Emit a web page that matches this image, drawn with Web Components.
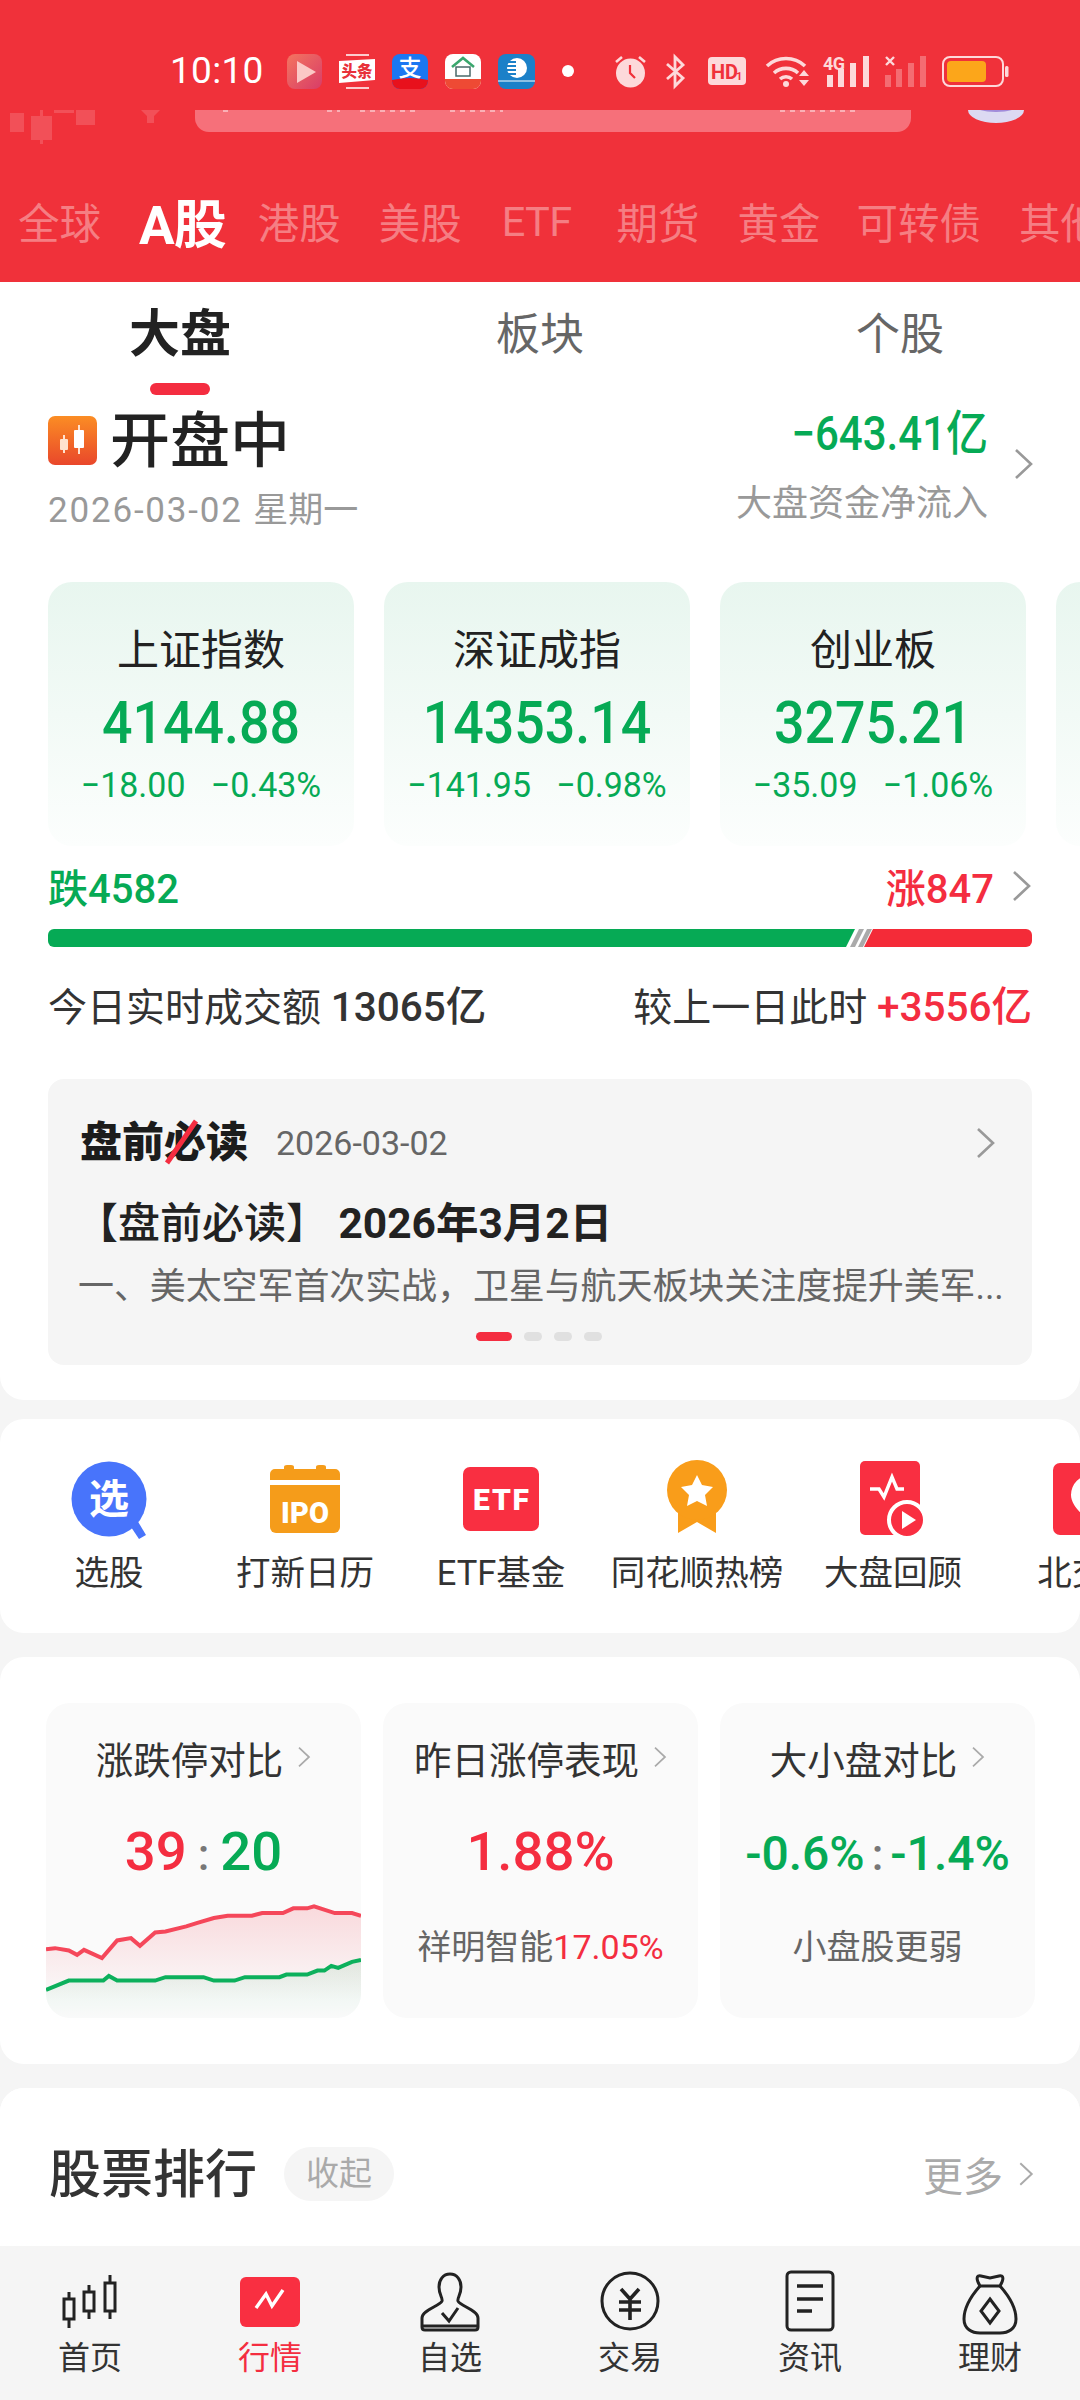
<!DOCTYPE html>
<html lang="zh">
<head>
<meta charset="utf-8">
<title>行情</title>
<style>
  html, body { margin: 0; padding: 0; }
  body { width: 1080px; height: 2400px; overflow: hidden; font-family: Roboto, "Noto Sans CJK SC", sans-serif; background: #f5f5f5; }
  market-app { --red: #f42d40; --green: #06aa55; --head: #f0313a; }
</style>
</head>
<body>
<market-app></market-app>
<script>
const chevron = (w, h, c = '#999') => `<svg width="${w}" height="${h}" viewBox="0 0 21 32" style="display:block;flex:none"><path d="M3 2 L18 16 L3 30" fill="none" stroke="${c}" stroke-width="2.6"/></svg>`;

class StatusBar extends HTMLElement {
  constructor() {
    super();
    this.attachShadow({ mode: 'open' });
    this.shadowRoot.innerHTML = `
      <style>
        :host { display: block; height: 110px; color: #fff; position: relative; }
        .row { display: flex; align-items: center; padding: 36px 0 0 170px; box-sizing: border-box; height: 106px; }
        .time { font-size: 37px; width: 95px; line-height: 70px; letter-spacing: .3px; }
        .apps { display: flex; gap: 17px; margin-left: 22px; }
        svg { display: block; flex: none; overflow: visible; }
        .dot { width: 12px; height: 12px; border-radius: 50%; background: #fff; margin: 0 0 0 27px; flex: none; }
      </style>
      <div class="row">
        <span class="time">10:10</span>
        <div class="apps">
          <svg width="35" height="35" viewBox="0 0 35 35"><defs><linearGradient id="v" x1="0" y1="0" x2="1" y2="1"><stop offset="0" stop-color="#f4755f"/><stop offset="1" stop-color="#d83c68"/></linearGradient></defs><rect width="35" height="35" rx="8" fill="url(#v)"/><path d="M10 7 L29 18 L10 29Z" fill="#fbc9c6"/></svg>
          <svg width="36" height="35" viewBox="0 0 36 35"><path d="M7 1H30M7 34H30" stroke="#fff" stroke-width="1.3"/><path d="M0 7 L36 5 V26 L0 29Z" fill="#fff"/><text x="18" y="23" font-size="15.5" font-weight="900" text-anchor="middle" fill="#e8313a" font-family="Noto Sans CJK SC">头条</text></svg>
          <svg width="36" height="35" viewBox="0 0 36 35"><rect width="36" height="35" rx="8" fill="#1b77f2"/><path d="M0 26 Q18 22 36 26 V27 A8 8 0 0 1 28 35 H8 A8 8 0 0 1 0 27Z" fill="#e8111c"/><text x="18" y="22" font-size="23" font-weight="500" text-anchor="middle" fill="#fff" font-family="Noto Sans CJK SC">支</text></svg>
          <svg width="36" height="35" viewBox="0 0 36 35"><rect width="36" height="35" rx="8" fill="#fff"/><path d="M0 25 H36 V27 A8 8 0 0 1 28 35 H8 A8 8 0 0 1 0 27Z" fill="#ee4a34"/><path d="M7 13 L18 4 L29 13" fill="none" stroke="#3aa76d" stroke-width="2.6"/><rect x="11" y="13" width="14" height="9" fill="none" stroke="#4a6a6a" stroke-width="1.5"/></svg>
          <svg width="37" height="35" viewBox="0 0 37 35"><rect width="37" height="35" rx="8" fill="#1b80c8"/><circle cx="19" cy="14" r="10" fill="#fff"/><path d="M6 8H18M6 12H18M6 16H18M6 20H18" stroke="#1b80c8" stroke-width="1.8"/><path d="M0 27 H37" stroke="#fff" stroke-width="1"/></svg>
        </div>
        <span class="dot"></span>
        <svg style="margin-left:41px" width="31" height="33" viewBox="0 0 31 33"><circle cx="15.5" cy="18" r="14.5" fill="#fdd9da"/><path d="M15 10 V18 L20 23" fill="none" stroke="#f0313a" stroke-width="2.2"/><path d="M1 7 L7 2M30 7 L24 2" stroke="#fdd9da" stroke-width="2.6"/></svg>
        <svg style="margin-left:19px" width="21" height="33" viewBox="0 0 21 33"><path d="M2 9 L18 23 L10 31 V2 L18 10 L2 24" fill="none" stroke="#fdd9da" stroke-width="2.8"/></svg>
        <svg style="margin-left:22px" width="38" height="28" viewBox="0 0 38 28"><rect width="38" height="28" rx="4" fill="#fdd9da"/><text x="3" y="22" font-size="20" font-weight="700" fill="#f0313a" font-family="Roboto">HD</text><text x="28" y="23" font-size="11" font-weight="700" fill="#f0313a" font-family="Roboto">1</text></svg>
        <svg style="margin-left:19px" width="45" height="32" viewBox="0 0 45 32"><path d="M2 11 A28 28 0 0 1 40 11 M9 18 A18 18 0 0 1 33 18 M15 24 A9 9 0 0 1 27 24" fill="none" stroke="#fdd9da" stroke-width="3.6"/><circle cx="21" cy="29" r="3" fill="#fdd9da"/><path d="M34 21 H44 L39 15Z M34 25 H44 L39 31Z" fill="#fdd9da"/></svg>
        <svg style="margin-left:13px" width="47" height="32" viewBox="0 0 47 32"><text x="0" y="15" font-size="18" font-weight="700" fill="#fdd9da" font-family="Roboto" textLength="22">4G</text><rect x="4" y="20" width="6" height="12" fill="#fdd9da"/><rect x="15" y="14" width="6" height="18" fill="#fdd9da"/><rect x="27" y="8" width="6" height="24" fill="#fdd9da"/><rect x="40" y="1" width="6" height="31" fill="#fdd9da"/></svg>
        <svg style="margin-left:14px" width="43" height="32" viewBox="0 0 43 32"><path d="M2 2 L10 10M10 2 L2 10" stroke="#fdd9da" stroke-width="2.4"/><g fill="#fdd9da" opacity=".35"><rect x="1" y="20" width="6" height="12"/><rect x="12" y="14" width="6" height="18"/><rect x="24" y="8" width="6" height="24"/><rect x="36" y="1" width="6" height="31"/></g></svg>
        <svg style="margin-left:15px" width="67" height="31" viewBox="0 0 67 31"><rect x="1" y="1" width="60" height="29" rx="7" fill="none" stroke="#fdd9da" stroke-width="2"/><rect x="5" y="5" width="39" height="21" rx="4" fill="#fca61a"/><rect x="63" y="10" width="3.5" height="11" rx="1.5" fill="#fdd9da"/></svg>
      </div>`;
  }
}

class HeaderTabs extends HTMLElement {
  constructor() {
    super();
    this.attachShadow({ mode: 'open' });
    this.shadowRoot.innerHTML = `
      <style>
        :host { display: block; height: 172px; background: var(--head); overflow: hidden; }
        .top { display: flex; height: 22px; padding-left: 195px; position: relative; }
        .search { width: 716px; height: 22px; background: #f6707a; border-radius: 0 0 14px 14px; }
        .deco { position: absolute; left: 0; top: 0; }
        .specks { position: absolute; left: 195px; top: 0; }
        .avatar { position: absolute; left: 968px; top: 0; }
        .tabs { display: flex; align-items: center; gap: 38px; height: 80px; margin-top: 49px; padding-left: 18px; white-space: nowrap; font-size: 41.5px; color: rgba(255,255,255,.38); }
        .tabs .etf { letter-spacing: -.6px; margin: 0 7px 0 2px; }
        .tabs .gold { margin-right: -2px; }
        .on { color: #fff; font-size: 53px; font-weight: 700; margin-right: -6px; letter-spacing: -1px; }
      </style>
      <div class="top">
        <svg class="deco" width="170" height="40" viewBox="0 0 170 40"><g fill="#fff" opacity=".15"><rect x="10" y="3" width="14" height="19"/><rect x="31" y="6" width="21" height="24"/><rect x="40" y="0" width="3" height="34"/><rect x="54" y="0" width="20" height="3"/><rect x="76" y="0" width="19" height="15"/><path d="M141 0H160L154 6V13H147V6Z"/></g></svg>
        <div class="search"></div>
        <svg class="specks" width="716" height="3" viewBox="0 0 716 3"><path d="M28 1H36M132 1H145M165 1H222M255 1H308M585 1H665" stroke="#fff" stroke-width="1.5" stroke-dasharray="5 5" opacity=".6"/></svg>
        <svg class="avatar" width="56" height="13" viewBox="0 0 56 13"><path d="M0 0 H56 A28 13 0 0 1 0 0Z" fill="#dcd9f2"/><path d="M12 0 H44 A22 6 0 0 1 12 0Z" fill="#7a56c9" opacity=".6"/></svg>
      </div>
      <div class="tabs">
        <span>全球</span><span class="on">A股</span><span>港股</span><span>美股</span><span class="etf">ETF</span><span>期货</span><span class="gold">黄金</span><span>可转债</span><span>其他</span>
      </div>`;
  }
}

class SubTabs extends HTMLElement {
  constructor() {
    super();
    this.attachShadow({ mode: 'open' });
    this.shadowRoot.innerHTML = `
      <style>
        :host { display: block; height: 114px; }
        .grid { display: grid; grid-template-columns: repeat(3, 360px); padding-top: 23px; text-align: center; font-size: 44px; line-height: 60px; color: #666; }
        .on { color: #222; font-size: 51px; font-weight: 700; }
        .on::after { content: ""; display: block; width: 60px; height: 12px; border-radius: 6px; background: var(--red); margin: 18px auto 0; }
      </style>
      <div class="grid"><div class="on">大盘</div><div>板块</div><div>个股</div></div>`;
  }
}

class MarketSummary extends HTMLElement {
  constructor() {
    super();
    this.attachShadow({ mode: 'open' });
    this.shadowRoot.innerHTML = `
      <style>
        :host { display: flex; justify-content: space-between; padding: 9px 46px 0 48px; height: 127px; }
        .title { display: flex; align-items: center; gap: 13px; height: 58px; margin-top: 8px; font-size: 60px; line-height: 58px; color: #222; font-weight: 500; white-space: nowrap; }
        .title svg { margin-top: -4px; flex: none; }
        .date { margin-top: 20px; font-size: 35px; line-height: 40px; color: #999; letter-spacing: 1.8px; }
        .date span { letter-spacing: 0; }
        .right { display: flex; align-items: center; gap: 25px; }
        .right > svg { margin-top: -10px; }
        .nums { text-align: right; }
        .amt { font-size: 48px; line-height: 50px; color: var(--green); font-weight: 500; transform: scaleX(.875); transform-origin: right center; white-space: nowrap; }
        .sub { font-size: 36px; line-height: 50px; margin-top: 20px; color: #999; }
      </style>
      <div>
        <div class="title"><svg width="49" height="49" viewBox="0 0 49 49"><defs><linearGradient id="o" x1="0" y1="0" x2="0" y2="1"><stop offset="0" stop-color="#fb8d24"/><stop offset="1" stop-color="#e9472b"/></linearGradient></defs><rect width="49" height="49" rx="7" fill="url(#o)"/><path d="M16 19V37M31 9V38" stroke="#ffe2cf" stroke-width="2"/><rect x="12" y="23" width="8" height="11" rx="1" fill="#ffe2cf"/><rect x="26" y="14" width="10" height="18" rx="1" fill="#fff"/></svg>开盘中</div>
        <div class="date">2026-03-02 <span>星期一</span></div>
      </div>
      <div class="right">
        <div class="nums"><div class="amt">−643.41亿</div><div class="sub">大盘资金净流入</div></div>
        ${chevron(21, 32)}
      </div>`;
  }
}

class IndexCard extends HTMLElement {
  constructor() {
    super();
    this.attachShadow({ mode: 'open' });
    this.shadowRoot.innerHTML = `
      <style>
        :host { display: block; flex: none; width: 306px; height: 264px; box-sizing: border-box; padding-top: 44px; border-radius: 24px; background: linear-gradient(#e8f6ef, #fcfefd); text-align: center; }
        .name { font-size: 42px; line-height: 50px; color: #222; }
        .val { margin-top: 17px; font-size: 59px; line-height: 60px; font-weight: 500; color: var(--green); transform: scaleX(.91); white-space: nowrap; }
        .chg { margin-top: 13px; display: flex; justify-content: center; gap: 26px; font-size: 35px; line-height: 40px; color: var(--green); white-space: nowrap; transform: scaleX(.97); }
      </style>
      <div class="name"></div><div class="val"></div>
      <div class="chg"><span class="a"></span><span class="b"></span></div>`;
  }

  connectedCallback() {
    this.shadowRoot.querySelector('.name').textContent = this.getAttribute('name');
    this.shadowRoot.querySelector('.val').textContent = this.getAttribute('value');
    this.shadowRoot.querySelector('.a').textContent = this.getAttribute('delta');
    this.shadowRoot.querySelector('.b').textContent = this.getAttribute('pct');
  }
}

class BreadthBar extends HTMLElement {
  constructor() {
    super();
    this.attachShadow({ mode: 'open' });
    this.shadowRoot.innerHTML = `
      <style>
        :host { display: block; padding: 15px 48px 0 48px; }
        .top { display: flex; justify-content: space-between; align-items: center; height: 50px; font-size: 40px; font-weight: 500; color: var(--green); }
        .up { display: flex; align-items: center; gap: 17px; color: var(--red); }
        svg.bar { display: block; margin-top: 18px; }
        .turn { display: flex; justify-content: space-between; margin-top: 35px; font-size: 39px; line-height: 50px; color: #333; white-space: nowrap; }
        b { font-weight: 500; font-size: 40.5px; }
        .r { color: var(--red); }
      </style>
      <div class="top"><span>跌4582</span><span class="up">涨847${chevron(21, 32)}</span></div>
      <svg class="bar" width="984" height="18" viewBox="0 0 984 18"><path d="M6 0 H807 L798 18 H6 A6 6 0 0 1 0 12 V6 A6 6 0 0 1 6 0Z" fill="#06aa55"/><path d="M811 0 H816 L807 18 H802Z M819 0 H824 L815 18 H810Z" fill="#aaa"/><path d="M825 0 H978 A6 6 0 0 1 984 6 V12 A6 6 0 0 1 978 18 H816Z" fill="#f42b38"/></svg>
      <div class="turn"><span>今日实时成交额 <b>13065亿</b></span><span>较上一日此时 <b class="r">+3556亿</b></span></div>`;
  }
}

class ReadCard extends HTMLElement {
  constructor() {
    super();
    this.attachShadow({ mode: 'open' });
    this.shadowRoot.innerHTML = `
      <style>
        :host { display: block; margin: 46px 48px 35px 48px; height: 286px; box-sizing: border-box; padding: 39px 36px 0 32px; background: #f5f5f5; border-radius: 16px; }
        .head { display: flex; align-items: center; height: 50px; }
        .logo { position: relative; font-size: 42px; font-weight: 900; color: #1c1c1c; line-height: 50px; width: 170px; white-space: nowrap; flex: none; }
        .logo svg { position: absolute; left: 84px; top: 1px; }
        .date { margin-left: 26px; font-size: 34px; color: #666; flex: 1; }
        .t { margin-top: 31px; font-size: 42px; line-height: 50px; color: #222; font-weight: 500; white-space: nowrap; margin-left: -4px; }
        .t b { font-weight: 700; font-size: 42.5px; }
        .s { margin-top: 13px; font-size: 36px; line-height: 50px; letter-spacing: -.1px; color: #666; white-space: nowrap; margin-left: -2px; }
        .dots { display: flex; justify-content: center; gap: 12px; margin-top: 20px; padding-left: 2px; }
        .dots i { display: block; width: 18px; height: 9px; border-radius: 4.5px; background: #e0e0e0; }
        .dots i:first-child { width: 36px; background: var(--red); }
      </style>
      <div class="head"><span class="logo">盘前必读<svg width="36" height="46" viewBox="0 0 36 46"><path d="M3 44 L32 2" stroke="#f42d40" stroke-width="5"/></svg></span><span class="date">2026-03-02</span>${chevron(21, 32)}</div>
      <div class="t">【盘前必读】 <b>2026年3月2日</b></div>
      <div class="s">一、美太空军首次实战，卫星与航天板块关注度提升美军...</div>
      <div class="dots"><i></i><i></i><i></i><i></i></div>`;
  }
}

class QuickItem extends HTMLElement {
  constructor() {
    super();
    this.attachShadow({ mode: 'open' });
    this.shadowRoot.innerHTML = `
      <style>
        :host { display: block; flex: none; width: 196px; text-align: center; }
        .i { display: flex; justify-content: center; height: 80px; }
        .l { margin-top: 11px; font-size: 34.5px; line-height: 44px; color: #333; white-space: nowrap; }
      </style>
      <div class="i"><slot></slot></div><div class="l"></div>`;
  }

  connectedCallback() {
    this.shadowRoot.querySelector('.l').textContent = this.getAttribute('label');
  }
}

class StatCard extends HTMLElement {
  constructor() {
    super();
    this.attachShadow({ mode: 'open' });
    this.shadowRoot.innerHTML = `
      <style>
        :host { display: block; height: 315px; box-sizing: border-box; padding-top: 30px; border-radius: 24px; background: #fafafa; overflow: hidden; text-align: center; }
        .t { display: flex; justify-content: center; align-items: center; gap: 14px; height: 48px; font-size: 37.5px; color: #333; white-space: nowrap; }
        .v { margin-top: 35px; height: 70px; line-height: 70px; font-size: 54.5px; font-weight: 500; white-space: nowrap; }
      </style>
      <div class="t"><span class="n"></span>${chevron(14, 22, '#aaa')}</div>
      <div class="v"><slot name="value"></slot></div>
      <slot></slot>`;
  }

  connectedCallback() {
    this.shadowRoot.querySelector('.n').textContent = this.getAttribute('name');
  }
}

class SubLine extends HTMLElement {
  constructor() {
    super();
    this.attachShadow({ mode: 'open' });
    this.shadowRoot.innerHTML = `
      <style>
        :host { display: block; margin-top: 39px; font-size: 34px; line-height: 44px; color: #666; white-space: nowrap; }
      </style>
      <slot></slot>`;
  }
}

class RankHead extends HTMLElement {
  constructor() {
    super();
    this.attachShadow({ mode: 'open' });
    this.shadowRoot.innerHTML = `
      <style>
        :host { display: flex; align-items: center; height: 158px; box-sizing: border-box; padding: 58px 46px 40px 49px; background: #fff; border-radius: 24px 24px 0 0; }
        h2 { margin: 0; font-size: 52px; line-height: 60px; font-weight: 500; color: #333; }
        .pill { margin: -5px 0 0 27px; width: 110px; height: 54px; line-height: 54px; border-radius: 27px; background: #f5f5f5; font-size: 33px; color: #aaa; text-align: center; }
        .more { margin: -5px 0 0 auto; display: flex; align-items: center; gap: 15px; font-size: 40px; color: #aaa; }
      </style>
      <h2>股票排行</h2><span class="pill">收起</span>
      <span class="more">更多${chevron(16, 32, '#aaa')}</span>`;
  }
}

class NavItem extends HTMLElement {
  constructor() {
    super();
    this.attachShadow({ mode: 'open' });
    this.shadowRoot.innerHTML = `
      <style>
        :host { display: block; width: 180px; flex: none; text-align: center; padding-top: 22px; }
        .i { display: flex; justify-content: center; height: 66px; }
        .l { margin-top: 2px; font-size: 32px; line-height: 44px; color: #333; }
        :host([active]) .l { color: var(--red); }
      </style>
      <div class="i"><slot></slot></div><div class="l"></div>`;
  }

  connectedCallback() {
    this.shadowRoot.querySelector('.l').textContent = this.getAttribute('label');
  }
}

class MarketApp extends HTMLElement {
  constructor() {
    super();
    this.attachShadow({ mode: 'open' });
    this.shadowRoot.innerHTML = `
      <style>
        :host { display: flex; flex-direction: column; height: 2400px; overflow: hidden; }
        svg { display: block; flex: none; }
        .scroll { flex: 1; min-height: 0; overflow: hidden; background: #f5f5f5; }
        .sec { background: #fff; border-radius: 24px; }
        .s1 { border-radius: 0 0 24px 24px; overflow: hidden; }
        .cards { display: flex; gap: 30px; margin-top: 50px; padding-left: 48px; overflow: hidden; }
        .s2 { margin-top: 19px; height: 214px; box-sizing: border-box; padding: 41px 0 0 11px; display: flex; overflow: hidden; }
        .s3 { margin-top: 24px; padding: 46px 46px 46px 46px; display: grid; grid-template-columns: repeat(3, 315px); gap: 22px; }
        .s4 { margin-top: 24px; }
        .red { color: var(--red); }
        .grn { color: var(--green); }
        .col { color: #777; margin: 0 11px; font-size: 44px; }
        .chart { display: block; width: 315px; height: 127px; margin-top: 7px; }
        .mid { display: inline-block; font-size: 48px; font-weight: 500; }
        .mid .col { margin: 0 7px; }
        nav { display: flex; height: 154px; flex: none; background: #f5f5f5; }
      </style>
      <status-head>
        <status-bar></status-bar>
        <header-tabs></header-tabs>
      </status-head>
      <div class="scroll">
        <section class="sec s1">
          <sub-tabs></sub-tabs>
          <market-summary></market-summary>
          <div class="cards">
            <index-card name="上证指数" value="4144.88" delta="−18.00" pct="−0.43%"></index-card>
            <index-card name="深证成指" value="14353.14" delta="−141.95" pct="−0.98%"></index-card>
            <index-card name="创业板" value="3275.21" delta="−35.09" pct="−1.06%"></index-card>
            <index-card name="" value="" delta="" pct=""></index-card>
          </div>
          <breadth-bar></breadth-bar>
          <read-card></read-card>
        </section>
        <section class="sec s2">
          <quick-item label="选股"><svg width="80" height="80" viewBox="0 0 80 80"><path d="M60 64 L70 79 L77 75 L68 60Z" fill="#4874fb"/><circle cx="40" cy="39" r="37.5" fill="#4874fb"/><text x="40" y="53" font-size="40" font-weight="700" text-anchor="middle" fill="#fff" font-family="Noto Sans CJK SC">选</text></svg></quick-item>
          <quick-item label="打新日历"><svg width="70" height="73" viewBox="0 0 70 73" style="margin-top:5px"><path d="M0 9 A5 5 0 0 1 5 4 H14 V2 Q14 0 17 0 H21 Q24 0 24 2 V4 H46 V2 Q46 0 49 0 H53 Q56 0 56 2 V4 H65 A5 5 0 0 1 70 9 V15 H0Z" fill="#f59c1a"/><path d="M0 20 H70 V62 A6 6 0 0 1 64 68 H6 A6 6 0 0 1 0 62Z" fill="#f59c1a"/><text x="35" y="58" font-size="29" font-weight="900" text-anchor="middle" fill="#fff" font-family="Roboto" textLength="48">IPO</text></svg></quick-item>
          <quick-item label="ETF基金"><svg width="76" height="80" viewBox="0 0 76 80"><rect y="7" width="76" height="64" rx="7" fill="#f92f41"/><text x="38" y="50" font-size="30" font-weight="900" text-anchor="middle" fill="#fff" font-family="Roboto" textLength="56">ETF</text></svg></quick-item>
          <quick-item label="同花顺热榜"><svg width="60" height="74" viewBox="0 0 60 74"><path d="M11 42 V73 L30 62 L49 73 V42Z" fill="#f99d1a"/><circle cx="30" cy="30" r="30" fill="#f99d1a"/><path d="M30 15 L35 25 L46 27 L38 35 L40 46 L30 41 L20 46 L22 35 L14 27 L25 25Z" fill="#fff"/></svg></quick-item>
          <quick-item label="大盘回顾"><svg width="66" height="80" viewBox="0 0 66 80" style="margin:1px 0 0 0;"><rect x="0" y="0" width="60" height="74" rx="5" fill="#f92f41"/><path d="M10 28 L19 28 L24 36 L32 16 L37 28 L44 28" fill="none" stroke="#fff" stroke-width="3.4"/><circle cx="47" cy="59" r="18" fill="#f92f41" stroke="#fff" stroke-width="4"/><path d="M42 50 L56 59 L42 68Z" fill="#fff"/></svg></quick-item>
          <quick-item label="北交所"><svg width="78" height="80" viewBox="0 0 78 80" style="margin-left:6px"><rect y="3" width="78" height="72" rx="7" fill="#f92f41"/><path d="M38 15 A20 20 0 0 1 58 35 C58 46 45 56 38 63 C31 56 18 46 18 35 A20 20 0 0 1 38 15Z" fill="#fff"/></svg></quick-item>
        </section>
        <section class="sec s3">
          <stat-card name="涨跌停对比">
            <span slot="value"><span class="red">39</span><span class="col">:</span><span class="grn">20</span></span>
            <svg class="chart" viewBox="67 640 456 380" preserveAspectRatio="none">
              <defs>
                <linearGradient id="rf" x1="0" y1="0" x2="0" y2="1"><stop offset="0" stop-color="#f42d40" stop-opacity=".16"/><stop offset="1" stop-color="#f42d40" stop-opacity="0"/></linearGradient>
                <linearGradient id="gf" x1="0" y1="0" x2="0" y2="1"><stop offset="0" stop-color="#06aa55" stop-opacity=".1"/><stop offset="1" stop-color="#06aa55" stop-opacity="0"/></linearGradient>
              </defs>
              <path d="M67 808 80 805 100 812 112 825 122 810 148 835 170 782 190 775 203 798 225 758 240 755 270 740 285 730 310 715 330 708 365 708 380 700 410 700 425 686 445 686 455 680 485 700 510 700 523 708 V960 H67Z" fill="url(#rf)"/>
              <path d="M67 930 100 902 150 902 158 888 170 902 225 902 240 892 295 892 310 902 340 902 355 892 405 892 415 884 445 884 460 872 470 872 480 858 490 864 510 846 523 840 V1018 H67Z" fill="url(#gf)"/>
              <path d="M67 808 80 805 100 812 112 825 122 810 148 835 170 782 190 775 203 798 225 758 240 755 270 740 285 730 310 715 330 708 365 708 380 700 410 700 425 686 445 686 455 680 485 700 510 700 523 708" fill="none" stroke="#f5475a" stroke-width="4" vector-effect="non-scaling-stroke"/>
              <path d="M67 930 100 902 150 902 158 888 170 902 225 902 240 892 295 892 310 902 340 902 355 892 405 892 415 884 445 884 460 872 470 872 480 858 490 864 510 846 523 840" fill="none" stroke="#0cb05c" stroke-width="4" vector-effect="non-scaling-stroke"/>
            </svg>
          </stat-card>
          <stat-card name="昨日涨停表现">
            <span slot="value" class="red">1.88%</span>
            <sub-line>祥明智能<span class="red">17.05%</span></sub-line>
          </stat-card>
          <stat-card name="大小盘对比">
            <span slot="value" class="mid"><span class="grn">-0.6%</span><span class="col">:</span><span class="grn">-1.4%</span></span>
            <sub-line>小盘股更弱</sub-line>
          </stat-card>
        </section>
        <section class="sec s4"><rank-head></rank-head></section>
      </div>
      <nav>
        <nav-item label="首页"><svg width="56" height="54" viewBox="0 0 56 54" style="margin-top:7px" fill="none" stroke="#222" stroke-width="3"><rect x="2" y="24" width="10" height="20"/><path d="M7 17V24M7 44V53"/><rect x="22" y="17" width="10" height="19"/><path d="M27 10V17M27 36V44"/><rect x="43" y="8" width="10" height="28"/><path d="M48 0V8M48 36V44"/></svg></nav-item>
        <nav-item label="行情" active><svg width="60" height="50" viewBox="0 0 60 50" style="margin-top:9px"><rect width="60" height="50" rx="6" fill="#f92f41"/><path d="M16 31 L26 17 L32 29 L43 13" fill="none" stroke="#fff" stroke-width="3.4"/></svg></nav-item>
        <nav-item label="自选"><svg width="60" height="60" viewBox="0 0 60 60" style="margin-top:4px" fill="none" stroke="#222" stroke-width="3"><path d="M30 2 C23 2 19 8 19 15 C19 23 23 26 22 29 C20 34 2 38 2 46 V55 Q2 58 5 58 H55 Q58 58 58 55 V46 C58 38 40 34 38 29 C37 26 41 23 41 15 C41 8 37 2 30 2Z"/><path d="M22 41 L29 49 L38 36"/><path d="M2 54 H58"/></svg></nav-item>
        <nav-item label="交易"><svg width="60" height="62" viewBox="0 0 60 62" style="margin-top:2px" fill="none" stroke="#222" stroke-width="3"><circle cx="30" cy="31" r="28" /><path d="M21 19 L30 29 L39 19M19 32 H41M19 40 H41M30 29 V50" stroke-width="3.6"/></svg></nav-item>
        <nav-item label="资讯"><svg width="50" height="62" viewBox="0 0 50 62" style="margin-top:2px" fill="none" stroke="#222" stroke-width="3"><rect x="2" y="2" width="46" height="58" rx="4"/><path d="M12 16 H38M12 29 H38M12 41 H27" stroke-width="3.6"/></svg></nav-item>
        <nav-item label="理财"><svg width="56" height="62" viewBox="0 0 56 62" style="margin-top:5px" fill="none" stroke="#222" stroke-width="3"><path d="M18 13 C10 22 2 33 2 46 C2 56 10 60 18 60 H38 C46 60 54 56 54 46 C54 33 46 22 38 13"/><path d="M18 13 C14 6 14 2 19 3 L28 5 L37 3 C42 2 42 6 38 13Z"/><path d="M28 26 L37 38 L28 50 L19 38Z"/></svg></nav-item>
      </nav>`;
  }
}

class StatusHead extends HTMLElement {
  constructor() {
    super();
    this.attachShadow({ mode: 'open' });
    this.shadowRoot.innerHTML = `
      <style>:host { display: block; flex: none; background: var(--head); }</style>
      <slot></slot>`;
  }
}

customElements.define('status-bar', StatusBar);
customElements.define('header-tabs', HeaderTabs);
customElements.define('status-head', StatusHead);
customElements.define('sub-tabs', SubTabs);
customElements.define('market-summary', MarketSummary);
customElements.define('index-card', IndexCard);
customElements.define('breadth-bar', BreadthBar);
customElements.define('read-card', ReadCard);
customElements.define('quick-item', QuickItem);
customElements.define('stat-card', StatCard);
customElements.define('sub-line', SubLine);
customElements.define('rank-head', RankHead);
customElements.define('nav-item', NavItem);
customElements.define('market-app', MarketApp);
</script>
</body>
</html>
